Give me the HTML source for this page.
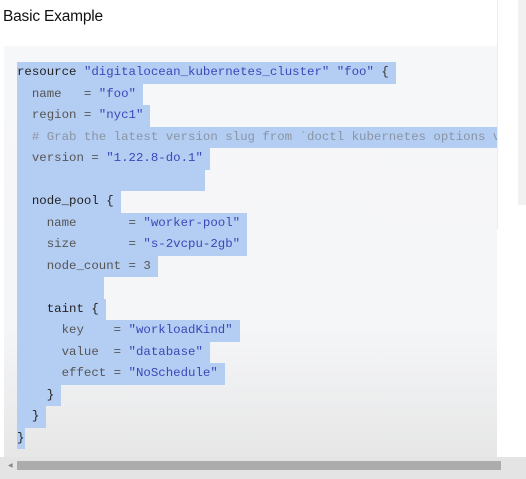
<!DOCTYPE html>
<html><head><meta charset="utf-8"><style>
body{margin:0;width:526px;height:479px;overflow:hidden;position:relative;background:#fff;font-family:"Liberation Sans",sans-serif}
h1{position:absolute;left:3px;top:8px;margin:0;font-size:15.5px;font-weight:normal;color:#111;letter-spacing:-0.2px}
.code{position:absolute;left:4px;top:46px;width:493px;height:433px;background:linear-gradient(#f6f7f9 0,#f5f6f8 280px,#e4e4e4 433px);overflow:hidden}
.l{position:absolute;left:13px;height:21.5px;line-height:21.5px;font-family:"Liberation Mono",monospace;font-size:12.4px;white-space:pre;color:#333;background:#b4cdf3;padding-right:7px}
.s{color:#3c47b8}.c{color:#8a95a5}.k{color:#222}.i{color:#555}
.right{position:absolute;left:497px;top:0;width:29px;height:229px;background:#fff;border-left:1px solid #ececec}
.right div{position:absolute;left:20px;top:0;width:9px;height:205px;background:#f1f1f1}
.sb{position:absolute;left:17px;top:461px;width:484px;height:9px;background:#acacac}
.bar{position:absolute;left:0;top:457px;width:526px;height:22px;background:#e4e4e4}
</style></head><body>
<h1>Basic Example</h1>
<div class="code">
<div class="l" style="top:16px"><span class="k">resource</span> <span class="s">"digitalocean_kubernetes_cluster"</span> <span class="s">"foo"</span> {</div>
<div class="l i" style="top:37.5px">  name   = <span class="s">"foo"</span></div>
<div class="l i" style="top:59px">  region = <span class="s">"nyc1"</span></div>
<div class="l c" style="top:80.5px;width:480px">  # Grab the latest version slug from `doctl kubernetes options versions`</div>
<div class="l i" style="top:102px">  version = <span class="s">"1.22.8-do.1"</span></div>
<div class="l" style="top:123.5px;width:181px"> </div>
<div class="l k" style="top:145px">  node_pool {</div>
<div class="l i" style="top:166.5px">    name       = <span class="s">"worker-pool"</span></div>
<div class="l i" style="top:188px">    size       = <span class="s">"s-2vcpu-2gb"</span></div>
<div class="l i" style="top:209.5px">    node_count = 3</div>
<div class="l" style="top:231px;width:80px"> </div>
<div class="l k" style="top:252.5px">    taint {</div>
<div class="l i" style="top:274px">      key    = <span class="s">"workloadKind"</span></div>
<div class="l i" style="top:295.5px">      value  = <span class="s">"database"</span></div>
<div class="l i" style="top:317px">      effect = <span class="s">"NoSchedule"</span></div>
<div class="l k" style="top:338.5px">    }</div>
<div class="l k" style="top:360px">  }</div>
<div class="l k" style="top:381.5px;padding-right:1px">}</div>
</div>
<div class="right"><div></div></div>
<div class="bar"></div>
<div class="sb"></div>
<div style="position:absolute;left:8px;top:462px;font-size:6px;color:#888">◀</div>
</body></html>
